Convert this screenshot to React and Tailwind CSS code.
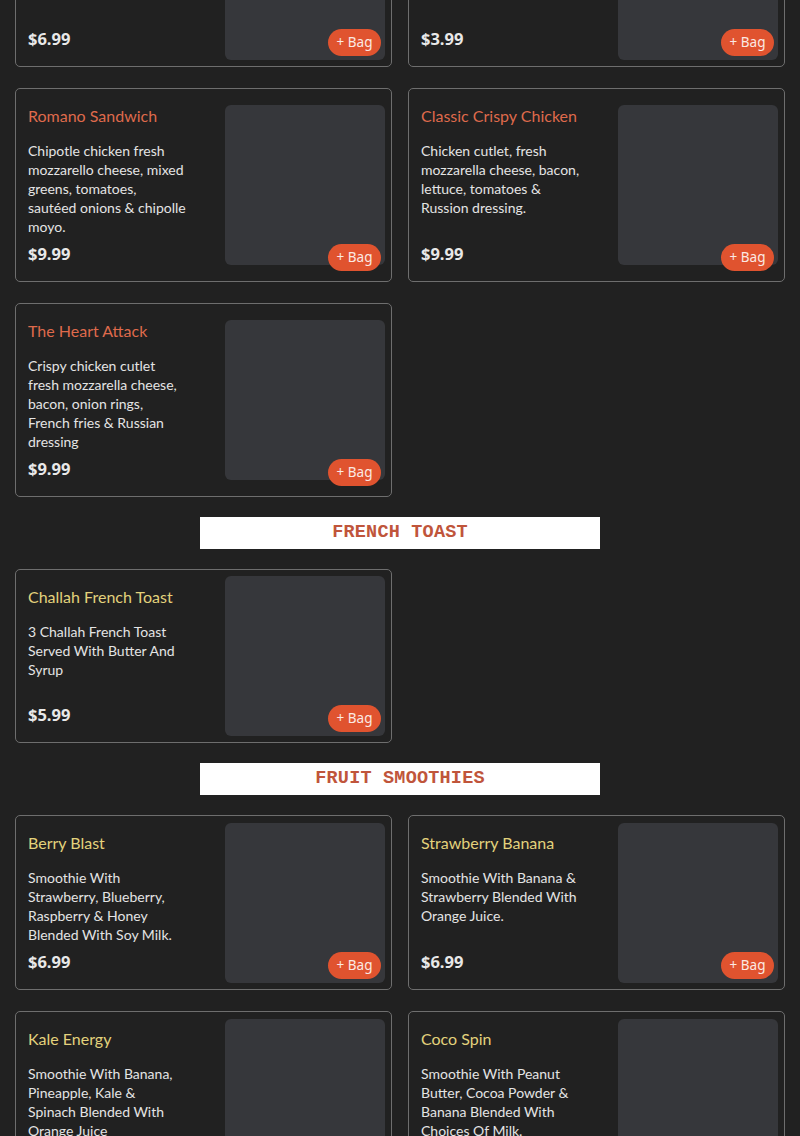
import React from "react";

const RED = "text-[#df6a4c]";
const YEL = "text-[#e3d27c]";

function Card({ title, lines, price, tone }) {
  return (
    <div className="relative flex rounded-[5px] border border-[#6e6e6e] p-1.5">
      <div className="flex min-w-0 flex-1 flex-col px-1.5 py-2.5">
        {title ? <div className={`text-[16px] leading-[22px] ${tone}`}>{title}</div> : null}
        {lines.length ? (
          <div className="mt-[14px] text-[14px] leading-[19px] text-[#e4e4e4]">
            {lines.map((l, i) => (
              <div key={i} className="whitespace-nowrap">
                {l}
              </div>
            ))}
          </div>
        ) : null}
        <div className="mt-auto pt-[7px] text-[16.5px] font-bold leading-[22px] text-[#e8e8e8] [font-family:'Open_Sans',sans-serif]">
          {price}
        </div>
      </div>
      <div className="h-40 w-40 shrink-0 self-center rounded-md bg-[#36373b]" />
      <button className="absolute bottom-[10px] right-[10px] flex h-[27px] w-[53px] items-center justify-center rounded-full bg-[#e0532f] text-[13.5px] text-[#fbe9e3] [font-family:'Noto_Sans',sans-serif]">
        + Bag
      </button>
    </div>
  );
}

function Section({ name }) {
  return (
    <div className="mx-auto flex h-8 w-[400px] items-center justify-center bg-white text-[18.5px] font-bold tracking-[0.2px] text-[#c0553b] [font-family:'Liberation_Mono',monospace]">
      {name}
    </div>
  );
}

export default function App() {
  return (
    <div className="h-[1136px] overflow-hidden bg-[#212121] px-[15px] [font-family:'Lato',sans-serif]">
      <div className="-mt-[107px] flex flex-col gap-5 pb-10">
        <div className="grid grid-cols-2 gap-x-4 gap-y-[21px]">
          <Card title="" lines={[]} price="$6.99" tone={RED} />
          <Card title="" lines={[]} price="$3.99" tone={RED} />
          <Card
            title="Romano Sandwich"
            lines={[
              "Chipotle chicken fresh",
              "mozzarello cheese, mixed",
              "greens, tomatoes,",
              "sautéed onions & chipolle",
              "moyo.",
            ]}
            price="$9.99"
            tone={RED}
          />
          <Card
            title="Classic Crispy Chicken"
            lines={[
              "Chicken cutlet, fresh",
              "mozzarella cheese, bacon,",
              "lettuce, tomatoes &",
              "Russion dressing.",
            ]}
            price="$9.99"
            tone={RED}
          />
          <Card
            title="The Heart Attack"
            lines={[
              "Crispy chicken cutlet",
              "fresh mozzarella cheese,",
              "bacon, onion rings,",
              "French fries & Russian",
              "dressing",
            ]}
            price="$9.99"
            tone={RED}
          />
        </div>
        <Section name="FRENCH TOAST" />
        <div className="grid grid-cols-2 gap-x-4 gap-y-[21px]">
          <Card
            title="Challah French Toast"
            lines={["3 Challah French Toast", "Served With Butter And", "Syrup"]}
            price="$5.99"
            tone={YEL}
          />
        </div>
        <Section name="FRUIT SMOOTHIES" />
        <div className="grid grid-cols-2 gap-x-4 gap-y-[21px]">
          <Card
            title="Berry Blast"
            lines={[
              "Smoothie With",
              "Strawberry, Blueberry,",
              "Raspberry & Honey",
              "Blended With Soy Milk.",
            ]}
            price="$6.99"
            tone={YEL}
          />
          <Card
            title="Strawberry Banana"
            lines={["Smoothie With Banana &", "Strawberry Blended With", "Orange Juice."]}
            price="$6.99"
            tone={YEL}
          />
          <Card
            title="Kale Energy"
            lines={[
              "Smoothie With Banana,",
              "Pineapple, Kale &",
              "Spinach Blended With",
              "Orange Juice",
            ]}
            price="$6.99"
            tone={YEL}
          />
          <Card
            title="Coco Spin"
            lines={[
              "Smoothie With Peanut",
              "Butter, Cocoa Powder &",
              "Banana Blended With",
              "Choices Of Milk.",
            ]}
            price="$6.99"
            tone={YEL}
          />
        </div>
      </div>
    </div>
  );
}
